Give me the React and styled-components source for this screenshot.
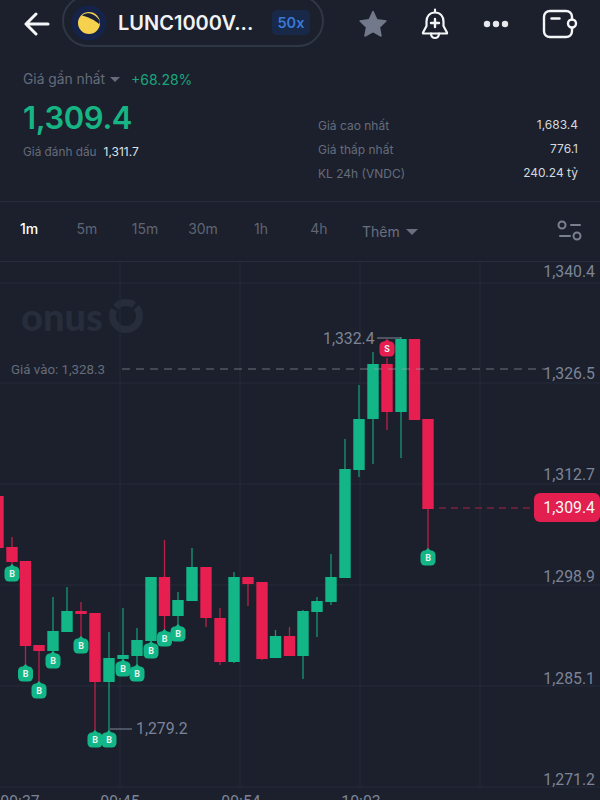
import React from 'react'
import styled, { createGlobalStyle } from 'styled-components'

const GlobalStyle = createGlobalStyle`
  html, body {
    margin: 0;
    padding: 0;
    background: #1b202c;
  }
  * { box-sizing: border-box; }
`

const Screen = styled.div`
  width: 600px;
  height: 800px;
  overflow: hidden;
  display: flex;
  flex-direction: column;
  background: #1b202c;
  color: #fff;
  font-family: Inter, 'Liberation Sans', sans-serif;
`

const TopBar = styled.header`
  height: 47px;
  flex: none;
  display: flex;
  align-items: center;
  padding-left: 24px;
`

const IconButton = styled.div`
  flex: none;
  width: ${({ $w }) => $w}px;
  margin-left: ${({ $ml }) => $ml || 0}px;
  display: flex;
  justify-content: center;
  align-items: center;
`

const Pill = styled.div`
  flex: none;
  width: 262px;
  height: 52px;
  margin: -6px 0 0 12px;
  padding: 4px 0 0 7px;
  display: flex;
  align-items: center;
  border: 2px solid #2f3644;
  border-radius: 26px;
`

const Symbol = styled.span`
  margin-left: 11px;
  width: 150px;
  font-size: 20px;
  font-weight: 600;
  color: #f1f2f5;
  white-space: nowrap;
`

const Leverage = styled.span`
  margin-left: 4px;
  padding: 4px 5.5px;
  border-radius: 5px;
  background: #182849;
  color: #3a78d8;
  font-size: 14.5px;
  font-weight: 600;
`

const Stats = styled.section`
  height: 155px;
  flex: none;
  padding: 23px 22px 0 23px;
  display: flex;
  justify-content: space-between;
  border-bottom: 1px solid #272d3a;
`

const Muted = styled.span`
  color: #666c7b;
  font-size: ${({ $size }) => $size || 12}px;
`

const LastRow = styled.div`
  height: 18px;
  display: flex;
  align-items: center;
  gap: 4px;
`

const Change = styled.span`
  margin-left: 7px;
  color: #1aa67c;
  font-size: 14px;
`

const Caret = styled.span`
  width: 0;
  height: 0;
  border-left: ${({ $size }) => $size}px solid transparent;
  border-right: ${({ $size }) => $size}px solid transparent;
  border-top: ${({ $size }) => $size}px solid ${({ $color }) => $color};
  margin-left: 1px;
`

const BigPrice = styled.div`
  margin-top: 12px;
  font-size: 31px;
  line-height: 36px;
  font-weight: 600;
  letter-spacing: -0.4px;
  color: #17b584;
`

const MarkRow = styled.div`
  margin-top: 8px;
  display: flex;
  align-items: center;
  gap: 7px;
`

const MarkLabel = styled(Muted)`
  font-size: 11.8px;
`

const MarkValue = styled.span`
  font-size: 12px;
  color: #dfe2e8;
`

const Summary = styled.dl`
  width: 260px;
  margin: 42px 0 0;
  display: grid;
  grid-template-columns: 1fr auto;
  grid-auto-rows: 24px;
  align-items: center;
`

const SummaryValue = styled.dd`
  margin: 0;
  text-align: right;
  font-size: 12px;
  color: #d5d8df;
`

const Tabs = styled.nav`
  height: 60px;
  flex: none;
  display: flex;
  align-items: center;
  border-bottom: 1px solid #272d3a;
  padding-bottom: 6px;
`

const Tab = styled.span`
  flex: none;
  width: 58px;
  text-align: center;
  font-size: 14px;
  font-weight: ${({ $active }) => ($active ? 500 : 400)};
  color: ${({ $active }) => ($active ? '#ffffff' : '#5f6574')};
`

const More = styled.div`
  margin: 6px 0 0 14px;
  display: flex;
  align-items: center;
  gap: 5px;
  font-size: 14px;
  color: #6a7080;
`

const FilterButton = styled.div`
  margin: 4px 17px 0 auto;
  display: flex;
`

const Chart = styled.main`
  position: relative;
  flex: 1;
  font-family: Roboto, 'Liberation Sans', sans-serif;
`

const ChartSvg = styled.svg`
  position: absolute;
  inset: 0;
  display: block;
`

const PriceAxis = styled.div`
  position: absolute;
  top: 0;
  right: 5px;
  display: flex;
  flex-direction: column;
  gap: 81.7px;
  text-align: right;
`

const AxisText = styled.span`
  display: block;
  height: 20px;
  font-size: 15.8px;
  line-height: 20px;
  color: #7d8497;
`

const PriceNote = styled(AxisText)`
  position: absolute;
  left: ${({ $x }) => $x}px;
  top: ${({ $y }) => $y}px;
`

const TimeLabel = styled(AxisText)`
  position: absolute;
  bottom: -12px;
  left: ${({ $x }) => $x}px;
  width: 60px;
  text-align: center;
`

const EntryLabel = styled.span`
  position: absolute;
  left: 11px;
  top: 99px;
  font-size: 13.3px;
  line-height: 18px;
  color: #666c7b;
`

const PriceTag = styled.div`
  position: absolute;
  left: 534px;
  top: 231px;
  width: 66px;
  height: 29px;
  padding-right: 5px;
  display: flex;
  align-items: center;
  justify-content: flex-end;
  border-radius: 6px;
  background: #e21f4e;
  font-size: 15.8px;
  color: #f7f7f8;
`

const Watermark = styled.div`
  position: absolute;
  left: 21px;
  top: 34px;
  display: flex;
  align-items: center;
  gap: 5px;
  font-family: Lato, 'Liberation Sans', sans-serif;
  font-size: 38px;
  line-height: 40px;
  font-weight: 900;
  color: #272d3b;
`

const GREEN = '#13b787'
const RED = '#e61f50'

// x, open, close (top/bottom of body), wick top, wick bottom, colour, marker
const candles = [
  [-2, 496, 548, 496, 548, RED],
  [12, 547, 562, 537, 566, RED, 'B', 574],
  [25.5, 561, 646, 561, 668, RED, 'B', 674],
  [39, 645, 651, 645, 684, RED, 'B', 691],
  [53, 631, 651, 597, 654, GREEN, 'B', 661],
  [67, 611, 632, 587, 632, GREEN],
  [81, 611, 614, 602, 639, RED, 'B', 646],
  [95, 613, 682, 613, 733, RED, 'B', 740],
  [109, 658, 682, 632, 733, GREEN, 'B', 740],
  [123, 655, 659, 608, 662, GREEN, 'B', 669],
  [137, 640, 656, 628, 667, GREEN, 'B', 674],
  [151, 577, 641, 577, 645, GREEN, 'B', 651],
  [164.5, 577, 616, 540, 632, RED, 'B', 639],
  [178, 600, 616, 592, 627, GREEN, 'B', 634],
  [192, 567, 601, 548, 601, GREEN],
  [206, 567, 618, 567, 627, RED],
  [220, 618, 662, 608, 665, RED],
  [234, 577, 662, 572, 663, GREEN],
  [248, 577, 584, 577, 606, RED],
  [262, 582, 659, 582, 660, RED],
  [275.5, 636, 658, 630, 658, GREEN],
  [289.5, 636, 656, 627, 656, RED],
  [303, 611, 656, 610, 679, GREEN],
  [317, 601, 612, 597, 637, GREEN],
  [331, 577, 602, 554, 605, GREEN],
  [345, 469, 578, 439, 578, GREEN],
  [359, 419, 470, 385, 477, GREEN],
  [373, 364, 419, 352, 464, GREEN],
  [387, 364, 412, 358, 430, RED, 'S', 349],
  [401, 339, 412, 337, 458, GREEN],
  [414.5, 339, 420, 339, 420, RED],
  [428, 419, 509, 419, 551, RED, 'B', 558],
]

const gridY = [283, 383, 484, 585, 686, 787]
const gridX = [120, 240, 360, 480]
const prices = ['1,340.4', '1,326.5', '1,312.7', '1,298.9', '1,285.1', '1,271.2']
const times = [['09:37', -10], ['09:45', 90], ['09:54', 211], ['10:03', 331]]
const intervals = ['1m', '5m', '15m', '30m', '1h', '4h']

function Marker({ x, y, label }) {
  const fill = label === 'S' ? RED : GREEN
  return (
    <g>
      <path d={`M${x - 3} ${y - 7}L${x} ${y - 10}L${x + 3} ${y - 7}Z`} fill={fill} />
      <rect x={x - 7.5} y={y - 7.5} width="15" height="15" rx="4.5" fill={fill} />
      <text x={x} y={y + 3.2} textAnchor="middle" fontSize="9" fontWeight="700" fontFamily="Roboto, sans-serif" fill="#e8f5f0">
        {label}
      </text>
    </g>
  )
}

function CandleChart() {
  return (
    <ChartSvg width="600" height="538" viewBox="0 262 600 538">
      {gridY.map((y) => <line key={y} x1="0" x2="600" y1={y} y2={y} stroke="#252b38" />)}
      {gridX.map((x) => <line key={x} x1={x} x2={x} y1="262" y2="787" stroke="#252b38" />)}

      {candles.map(([x, top, bottom, wickTop, wickBottom, color]) => (
        <g key={x}>
          <line x1={x} x2={x} y1={wickTop} y2={wickBottom} stroke={color} strokeWidth="1.3" opacity="0.8" />
          <rect x={x - 5.7} y={top} width="11.4" height={bottom - top} fill={color} />
        </g>
      ))}
      {candles.filter((c) => c[6]).map(([x, , , , , , label, y]) => (
        <Marker key={x} x={x} y={y} label={label} />
      ))}

      <line x1="122" x2="545" y1="369" y2="369" stroke="#a3a7b1" strokeWidth="1" strokeDasharray="8 6" opacity="0.6" />
      <line x1="439" x2="534" y1="508" y2="508" stroke={RED} strokeWidth="1" strokeDasharray="7 5" opacity="0.75" />
      <line x1="377" x2="401" y1="338" y2="338" stroke="#7f8697" strokeWidth="1" />
      <line x1="110" x2="132" y1="729" y2="729" stroke="#7f8697" strokeWidth="1" />
    </ChartSvg>
  )
}

function BackIcon() {
  return (
    <svg width="26" height="26" viewBox="0 0 26 26" fill="none" stroke="#f4f5f7" strokeWidth="3" strokeLinecap="round" strokeLinejoin="round">
      <path d="M24 13H2.5M12 3L2 13l10 10" />
    </svg>
  )
}

function CoinIcon() {
  return (
    <svg width="36" height="36" viewBox="0 0 36 36">
      <circle cx="18" cy="18" r="17.5" fill="#15234a" />
      <circle cx="18" cy="18" r="11" fill="#f5d14e" />
      <path d="M11 10.5C14 7 23 6.5 28.5 15.5C29 17 28.5 18.5 28 19C24 15 16 11.5 11 10.5Z" fill="#1a2238" />
    </svg>
  )
}

function StarIcon() {
  return (
    <svg width="30" height="30" viewBox="0 0 30 30">
      <path d="M15 2.5l3.900 8.200 9 1.200-6.500 6.200 1.600 8.900-8-4.300-8 4.300 1.600-8.900-6.500-6.200 9-1.200z" fill="#72798a" stroke="#72798a" strokeWidth="1.5" strokeLinejoin="round" />
    </svg>
  )
}

function BellIcon() {
  return (
    <svg width="28" height="32" viewBox="0 0 28 32" fill="none" stroke="#f4f5f7" strokeWidth="2.2" strokeLinecap="round" strokeLinejoin="round">
      <path d="M14 1.500v3M14 4.500c-5.500 0-8.500 4-8.500 9v4.500L2 24.500v1h24v-1L22.500 18v-4.500c0-5-3-9-8.500-9z" />
      <path d="M10 25.500c0 3 2 4.500 4 4.500s4-1.500 4-4.500" />
      <path d="M14 11v8M10 15h8" strokeWidth="2.400" />
    </svg>
  )
}

function DotsIcon() {
  return (
    <svg width="26" height="8" viewBox="0 0 26 8" fill="#e6e8ec">
      <circle cx="4" cy="4" r="3.2" />
      <circle cx="13" cy="4" r="3.2" />
      <circle cx="22" cy="4" r="3.2" />
    </svg>
  )
}

function WalletIcon() {
  return (
    <svg width="36" height="30" viewBox="0 0 36 30" fill="none" stroke="#f4f5f7" strokeWidth="2.400" strokeLinecap="round">
      <path d="M30 10.500V8c0-3.500-2.500-6-6-6H8C4.500 2 2 4.500 2 8v14c0 3.500 2.500 6 6 6h16c3.500 0 6-2.500 6-6v-3" />
      <path d="M9.500 9.500h8" />
      <rect x="26" y="10.500" width="8" height="8" rx="4" />
    </svg>
  )
}

function FilterIcon() {
  return (
    <svg width="26" height="24" viewBox="0 0 26 24" fill="none" stroke="#7a8090" strokeWidth="2" strokeLinecap="round">
      <circle cx="5" cy="6" r="3.500" />
      <path d="M14 6h9M3 17h10" />
      <circle cx="20" cy="17" r="3.500" />
    </svg>
  )
}

function RingIcon() {
  return (
    <svg width="36" height="36" viewBox="0 0 36 36" fill="none" stroke="#272d3b" strokeWidth="7">
      <circle cx="18" cy="18" r="13.500" strokeDasharray="58 3 20 4" transform="rotate(-40 18 18)" />
    </svg>
  )
}

export default function App() {
  return (
    <Screen>
      <GlobalStyle />
      <TopBar>
        <IconButton $w={26}><BackIcon /></IconButton>
        <Pill>
          <CoinIcon />
          <Symbol>LUNC1000V...</Symbol>
          <Leverage>50x</Leverage>
        </Pill>
        <IconButton $w={30} $ml={34}><StarIcon /></IconButton>
        <IconButton $w={28} $ml={33}><BellIcon /></IconButton>
        <IconButton $w={26} $ml={34}><DotsIcon /></IconButton>
        <IconButton $w={36} $ml={33}><WalletIcon /></IconButton>
      </TopBar>

      <Stats>
        <div>
          <LastRow>
            <Muted $size={13.8}>Giá gần nhất</Muted>
            <Caret $size={5} $color="#666c7b" />
            <Change>+68.28%</Change>
          </LastRow>
          <BigPrice>1,309.4</BigPrice>
          <MarkRow>
            <MarkLabel>Giá đánh dấu</MarkLabel>
            <MarkValue>1,311.7</MarkValue>
          </MarkRow>
        </div>
        <Summary>
          <dt><Muted>Giá cao nhất</Muted></dt>
          <SummaryValue>1,683.4</SummaryValue>
          <dt><Muted>Giá thấp nhất</Muted></dt>
          <SummaryValue>776.1</SummaryValue>
          <dt><Muted>KL 24h (VNDC)</Muted></dt>
          <SummaryValue>240.24 tỷ</SummaryValue>
        </Summary>
      </Stats>

      <Tabs>
        {intervals.map((t, i) => <Tab key={t} $active={i === 0}>{t}</Tab>)}
        <More>
          Thêm
          <Caret $size={6} $color="#6a7080" />
        </More>
        <FilterButton><FilterIcon /></FilterButton>
      </Tabs>

      <Chart>
        <Watermark>
          onus
          <RingIcon />
        </Watermark>
        <CandleChart />
        <PriceAxis>
          {prices.map((p) => <AxisText key={p}>{p}</AxisText>)}
        </PriceAxis>
        <EntryLabel>Giá vào: 1,328.3</EntryLabel>
        <PriceNote $x={323} $y={67}>1,332.4</PriceNote>
        <PriceNote $x={136} $y={457}>1,279.2</PriceNote>
        <PriceTag>1,309.4</PriceTag>
        {times.map(([t, x]) => <TimeLabel key={t} $x={x}>{t}</TimeLabel>)}
      </Chart>
    </Screen>
  )
}
